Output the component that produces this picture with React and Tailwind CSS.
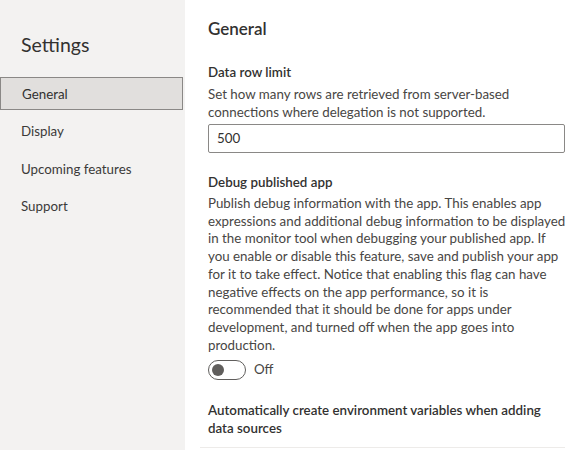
export default function App() {
  const nav = ["General", "Display", "Upcoming features", "Support"];
  return (
    <div
      className="flex h-[450px] w-[569px] overflow-hidden bg-white text-[#323130]"
      style={{ fontFamily: 'Lato, sans-serif' }}
    >
      <aside className="flex w-[185px] shrink-0 flex-col bg-[#f3f2f1]">
        <h1 className="mt-[33px] pl-[21px] text-[19.5px] leading-[24px] text-[#323130]">Settings</h1>
        <nav className="mt-[20px] flex flex-col gap-[4.5px]">
          {nav.map((n, i) => (
            <div
              key={n}
              className={
                "flex h-[33px] items-center pl-[21px] pt-[2px] text-[13.33px] " +
                (i === 0
                  ? "mr-[2px] border border-[#8a8886] bg-[#e1dfdd] text-[#323130]"
                  : "text-[#3b3a39]")
              }
            >
              {n}
            </div>
          ))}
        </nav>
      </aside>
      <main className="flex min-w-0 flex-1 flex-col pl-[23px] pr-[4px]">
        <h2 className="mt-[18px] text-[17px] font-semibold leading-[22px] text-[#323130]">General</h2>
        <section className="mt-[23px]">
          <h3 className="text-[13.33px] font-semibold leading-[18px]">Data row limit</h3>
          <p className="mt-[4px] text-[13.33px] leading-[18px] text-[#484644]">
            Set how many rows are retrieved from server-based
            <br />
            connections where delegation is not supported.
          </p>
          <div className="mt-[3px] flex h-[29px] items-center rounded-[2px] border border-[#8a8886] pl-[8px] text-[13.33px] text-[#323130]">
            500
          </div>
        </section>
        <section className="mt-[20px]">
          <h3 className="text-[13.33px] font-semibold leading-[18px]">Debug published app</h3>
          <p className="mt-[4px] whitespace-nowrap text-[13.33px] leading-[17.7px] text-[#484644]">
            Publish debug information with the app. This enables app
            <br />
            expressions and additional debug information to be displayed
            <br />
            in the monitor tool when debugging your published app. If
            <br />
            you enable or disable this feature, save and publish your app
            <br />
            for it to take effect. Notice that enabling this flag can have
            <br />
            negative effects on the app performance, so it is
            <br />
            recommended that it should be done for apps under
            <br />
            development, and turned off when the app goes into
            <br />
            production.
          </p>
          <div className="mt-[6px] flex items-center gap-[8px]">
            <div className="flex h-[20px] w-[38px] items-center rounded-full border border-[#605e5c] pl-[3px]">
              <div className="h-[12px] w-[12px] rounded-full bg-[#605e5c]" />
            </div>
            <span className="text-[13.33px] text-[#484644]">Off</span>
          </div>
        </section>
        <section className="mt-[21px]">
          <h3 className="text-[13.33px] font-semibold leading-[18px]">
            Automatically create environment variables when adding
            <br />
            data sources
          </h3>
        </section>
        <div className="mt-[10px] -ml-[8px] border-t border-[#edebe9]" />
      </main>
    </div>
  );
}
